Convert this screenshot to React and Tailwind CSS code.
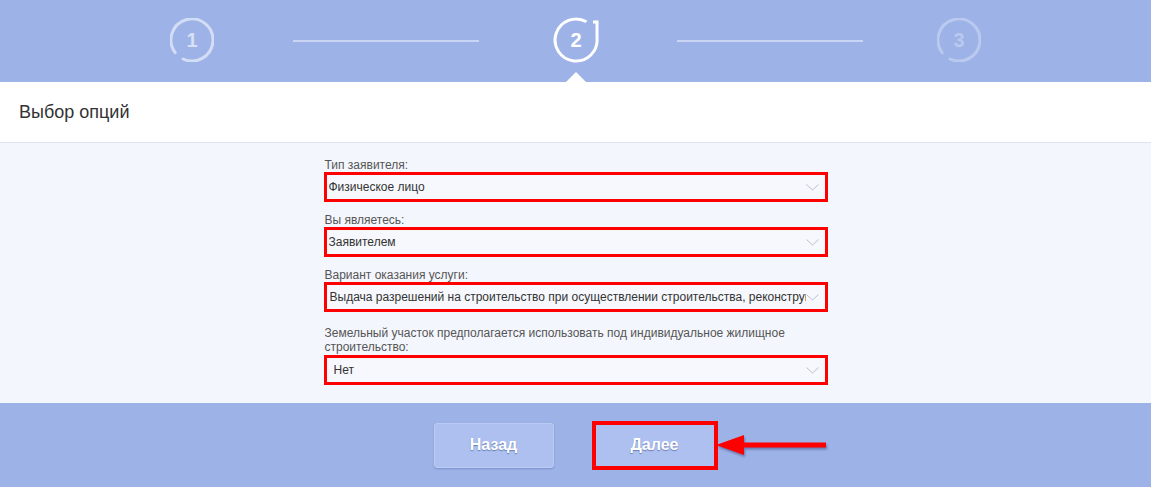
import React from 'react'

const fields = [
  { label: 'Тип заявителя:', value: 'Физическое лицо', pad: 'pl-[2px]' },
  { label: 'Вы являетесь:', value: 'Заявителем', pad: 'pl-[2px]' },
  {
    label: 'Вариант оказания услуги:',
    value:
      'Выдача разрешений на строительство при осуществлении строительства, реконструкции объекта капитального строительства',
    pad: 'pl-[3px]',
  },
  {
    label:
      'Земельный участок предполагается использовать под индивидуальное жилищное строительство:',
    value: 'Нет',
    pad: 'pl-[7px]',
    tall: true,
  },
]

const StepDone = ({ n, faded }) => (
  <div className="relative w-[44px] h-[44px] flex items-center justify-center">
    <svg width="44" height="44" viewBox="0 0 44 44" className="absolute inset-0">
      <path
        d="M5.2 34.6 A21 21 0 1 1 13.1 41.0"
        fill="none"
        stroke="white"
        strokeOpacity={faded ? 0.3 : 0.55}
        strokeWidth="3"
        strokeLinecap="round"
      />
    </svg>
    <span
      className={`relative text-[20px] font-bold leading-none ${
        faded ? 'text-white/30' : 'text-white/60'
      }`}
    >
      {n}
    </span>
  </div>
)

// refresh-like ring for the current step
const StepActive = () => (
  <div className="relative w-[44px] h-[44px] flex items-center justify-center">
    <svg width="46" height="46" viewBox="0 0 46 46" className="absolute -left-px -top-px">
      <path
        d="M33.5 4.8 A21 21 0 1 0 44 21 L44 5 L40 5"
        fill="none"
        stroke="white"
        strokeWidth="3"
        strokeLinejoin="miter"
      />
    </svg>
    <span className="relative text-[20px] font-bold leading-none text-white">2</span>
    <div className="absolute left-1/2 top-[54px] -ml-[10px] w-0 h-0 border-l-[10px] border-r-[10px] border-b-[10px] border-l-transparent border-r-transparent border-b-white" />
  </div>
)

const Chevron = () => (
  <svg width="13" height="7" viewBox="0 0 13 7" className="shrink-0">
    <path d="M0.5 0.5 L6.5 6 L12.5 0.5" fill="none" stroke="#b9bfcd" strokeWidth="1" />
  </svg>
)

export default function App() {
  return (
    <div className="w-[1151px] h-[487px] overflow-hidden font-['Liberation_Sans',Arial,sans-serif]">
      <div className="h-[82px] bg-[#9db3e8] flex justify-center pt-[18px]">
        <StepDone n="1" />
        <div className="w-[186px] h-[2px] bg-white/45 mt-[22px] ml-[79px] mr-[75px]" />
        <StepActive />
        <div className="w-[186px] h-[2px] bg-white/45 mt-[22px] ml-[79px] mr-[74px]" />
        <StepDone n="3" faded />
      </div>

      <div className="h-[61px] bg-white border-b border-[#e0e4ef] px-[19px] flex items-center">
        <h1 className="text-[18px] text-[#333]">Выбор опций</h1>
      </div>

      <div className="h-[260px] bg-[#f4f6fd] flex justify-center pt-[16px]">
        <div className="w-[504px] flex flex-col gap-[12px]">
          {fields.map((f) => (
            <div key={f.label} className={f.tall ? 'mt-[2px]' : ''}>
              <div
                className={`text-[12px] text-[#555] pl-[1px] ${
                  f.tall ? 'leading-[14px] mb-[1px]' : 'leading-[13px]'
                }`}
              >
                {f.label}
              </div>
              <div
                className={`h-[30px] border-[3px] border-[#ff0000] bg-[#f6f8fd] flex items-center pr-[6px] ${f.pad}`}
              >
                <span className="flex-1 min-w-0 overflow-hidden whitespace-nowrap text-[12px] text-[#333]">
                  {f.value}
                </span>
                <Chevron />
              </div>
            </div>
          ))}
        </div>
      </div>

      <div className="h-[84px] bg-[#9db3e8] flex items-center justify-center gap-[38px]">
        <button className="w-[120px] h-[45px] rounded-[3px] bg-[#adc0f0] border border-[#bccbf3] shadow-[0_1px_2px_rgba(60,80,140,0.35)] text-white text-[16px] font-bold [text-shadow:0_1px_1px_rgba(40,60,120,0.5)]">
          Назад
        </button>
        <div className="relative border-[4px] border-[#ff0000]">
          <button className="w-[118px] h-[41px] bg-[#adc0f0] text-white text-[16px] font-bold [text-shadow:0_1px_1px_rgba(40,60,120,0.5)]">
            Далее
          </button>
          <svg
            width="112"
            height="24"
            viewBox="0 0 112 24"
            className="absolute left-full top-1/2 -mt-[12px] ml-[2px] drop-shadow-[1px_2px_1px_rgba(40,50,100,0.45)]"
          >
            <polygon points="0,12 28,2 28,9.5 110,9.5 110,14.5 28,14.5 28,22" fill="#ff0000" />
          </svg>
        </div>
      </div>
    </div>
  )
}
